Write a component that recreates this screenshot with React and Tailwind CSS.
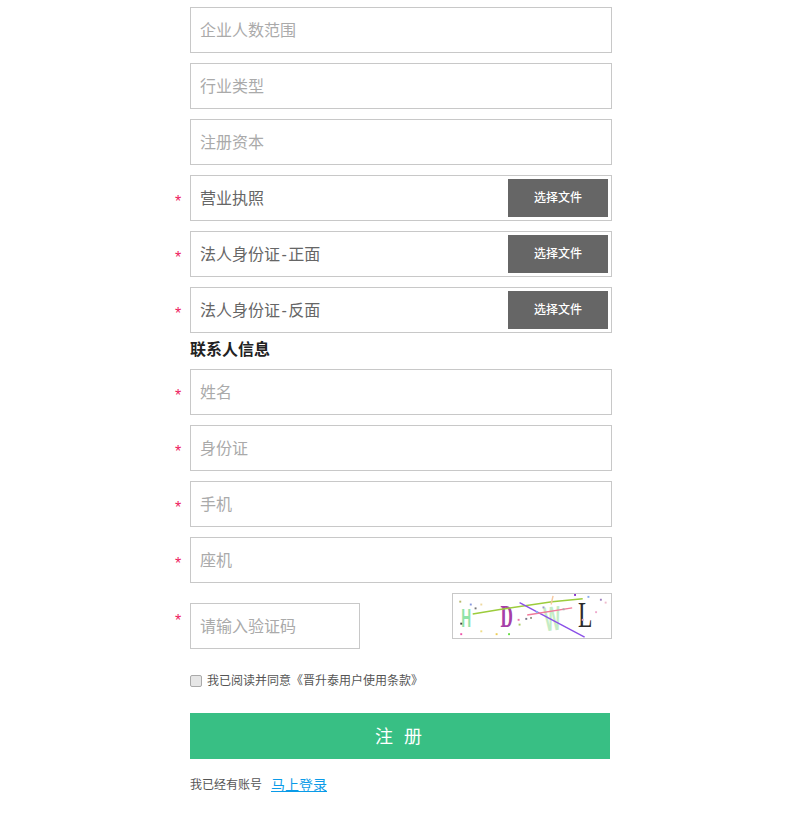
import React from 'react';

const Star = ({ show = true, className = '' }) => (
  <div className={`w-[20px] shrink-0 pl-[5px] text-[16px] leading-[16px] text-[#ee1c5f] ${className}`}>
    {show ? '*' : ''}
  </div>
);

const TextRow = ({ placeholder, required = false }) => (
  <div className="flex items-center">
    <Star show={required} className="pt-[8px]" />
    <input
      readOnly
      placeholder={placeholder}
      className="w-[422px] h-[46px] border border-[#c8c8c8] bg-white px-[9px] pt-[2px] text-[16px] text-[#555] placeholder:text-[#aaaaaa] outline-none"
    />
  </div>
);

const FileRow = ({ label, suffix }) => (
  <div className="flex items-center">
    <Star className="pt-[8px]" />
    <div className="w-[422px] h-[46px] border border-[#c8c8c8] bg-white pl-[9px] pr-[3px] flex items-center justify-between">
      <span className="pt-[2px] text-[16px] text-[#666]">
        {label}
        {suffix && <span className="mx-[1.5px]">-</span>}
        {suffix}
      </span>
      <button className="w-[100px] h-[38px] bg-[#666666] text-white text-[12px] font-medium">选择文件</button>
    </div>
  </div>
);

const dots = [
  [4, 7, '#b8b86a'], [15, 10, '#8899dd'], [20, 14, '#777777'], [26, 10, '#eed9a0'],
  [5, 30, '#444444'], [5, 41, '#ee55aa'], [26, 38, '#eedd88'], [42, 41, '#eecc55'],
  [55, 41, '#66dd44'], [65, 26, '#ee77aa'], [66, 31, '#aacc66'], [73, 25, '#777788'],
  [78, 24, '#999988'], [84, 18, '#88bbee'], [91, 13, '#9999cc'], [112, 15, '#aaaaaa'],
  [132, 26, '#ddaacc'], [124, 0, '#8833cc'], [138, 2, '#88aaee'], [151, 5, '#a080c0'],
  [146, 18, '#eeaacc'], [156, 8, '#eebbcc'],
];

const Captcha = () => (
  <svg width="160" height="46" viewBox="0 0 160 46" className="block border border-[#c8c8c8] bg-white">
    <text transform="translate(6 34) scale(0.55 1)" fontSize="26" fontWeight="700" fontFamily="Liberation Sans, sans-serif" fill="#8fe3a8">H</text>
    <text transform="translate(47 35) scale(0.56 1)" fontSize="32" fontFamily="Liberation Serif, serif" fontWeight="700" fill="#a53fa8">D</text>
    <text transform="translate(94 39) rotate(-6) scale(0.5 1)" fontSize="36" fontWeight="700" fontFamily="Liberation Sans, sans-serif" fill="#c4ecc4">W</text>
    <text transform="translate(128 34) scale(0.65 1)" fontSize="38" fontFamily="Liberation Serif, serif" fill="#2b2b2b">L</text>
    <path d="M18 21 L48 16 L101 8 L133 5" stroke="#9ccc3c" strokeWidth="1.6" fill="none" />
    <path d="M67 9 L135 45" stroke="#8a4fe8" strokeWidth="1.4" fill="none" />
    <path d="M75 22 L122 14.5" stroke="#f07a9a" strokeWidth="1.5" fill="none" />
    <path d="M100 11 L102 2" stroke="#f5c9a0" strokeWidth="1.5" fill="none" />
    {dots.map(([x, y, c]) => (
      <rect key={`${x}-${y}`} x={x} y={y} width="2" height="2" fill={c} />
    ))}
  </svg>
);

export default function App() {
  return (
    <div className="min-h-[825px] bg-white pl-[170px] pt-[7px]">
      <div className="w-[442px] flex flex-col gap-[10px] font-['Liberation_Sans','Noto_Sans_CJK_SC',sans-serif]">
        <TextRow placeholder="企业人数范围" />
        <TextRow placeholder="行业类型" />
        <TextRow placeholder="注册资本" />
        <FileRow label="营业执照" />
        <FileRow label="法人身份证" suffix="正面" />
        <FileRow label="法人身份证" suffix="反面" />
        <h3 className="ml-[20px] h-[20px] -mt-[3px] -mb-[1px] text-[16px] leading-[20px] font-bold text-[#222]">联系人信息</h3>
        <TextRow placeholder="姓名" required />
        <TextRow placeholder="身份证" required />
        <TextRow placeholder="手机" required />
        <TextRow placeholder="座机" required />
        <div className="flex items-start">
          <Star className="pt-[20px]" />
          <div className="w-[422px] flex justify-between items-start">
            <input
              readOnly
              placeholder="请输入验证码"
              className="mt-[10px] w-[170px] h-[46px] border border-[#c8c8c8] bg-white px-[9px] pt-[2px] text-[16px] text-[#555] placeholder:text-[#aaaaaa] outline-none"
            />
            <Captcha />
          </div>
        </div>
        <div className="ml-[20px] mt-[14px] flex items-center h-[16px] text-[12px] text-[#555]">
          <span className="w-[12px] h-[12px] rounded-[2px] border border-[#aaaaaa] bg-[#e6e6e6] mr-[5px]" />
          <span>我已阅读并同意《晋升泰用户使用条款》</span>
        </div>
        <button className="ml-[20px] mt-[14px] w-[420px] h-[46px] pt-[2px] bg-[#38bf84] text-white text-[18px] tracking-[3px]">注&nbsp;册</button>
        <div className="ml-[20px] mt-[6px] flex items-center text-[12px] text-[#555] h-[20px]">
          <span>我已经有账号</span>
          <a href="#" className="ml-[9px] text-[14px] text-[#0a9be8] underline">马上登录</a>
        </div>
      </div>
    </div>
  );
}
